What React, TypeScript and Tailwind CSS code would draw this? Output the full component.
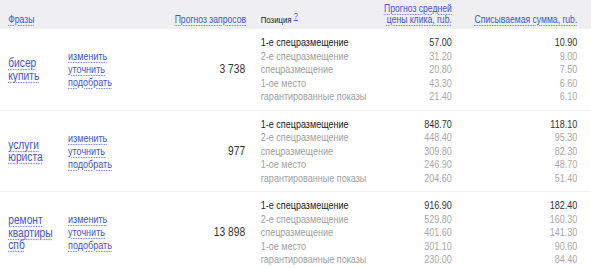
const positions = [
  "1-е спецразмещение",
  "2-е спецразмещение",
  "спецразмещение",
  "1-ое место",
  "гарантированные показы",
];

interface Row {
  phrase: string[];
  forecast: string;
  prices: string[];
  sums: string[];
}

const rows: Row[] = [
  {
    phrase: ["бисер", "купить"],
    forecast: "3 738",
    prices: ["57.00", "31.20", "20.80", "43.30", "21.40"],
    sums: ["10.90", "9.00", "7.50", "6.60", "6.10"],
  },
  {
    phrase: ["услуги", "юриста"],
    forecast: "977",
    prices: ["848.70", "448.40", "309.80", "246.90", "204.60"],
    sums: ["118.10", "95.30", "82.30", "48.70", "51.40"],
  },
  {
    phrase: ["ремонт", "квартиры", "спб"],
    forecast: "13 898",
    prices: ["916.90", "529.80", "401.60", "301.10", "230.00"],
    sums: ["182.40", "160.30", "141.30", "90.60", "84.40"],
  },
];

// the whole table is drawn in a condensed arial look: laid out wider, then squeezed
const grid =
  "grid grid-cols-[83px_130px_86px_158px_94px_153px] pr-[17px]";

function Link({ children }: { children: React.ReactNode }) {
  return (
    <span className="text-[#4455cc] underline decoration-dotted decoration-[#6677dd] underline-offset-2">
      {children}
    </span>
  );
}

export default function App() {
  return (
    <div className="w-[591px] h-[268px] overflow-hidden bg-white">
      <div
        className="w-[721px] origin-top-left scale-x-[0.82] text-[11px]"
        style={{ fontFamily: '"Liberation Sans", Arial, sans-serif' }}
      >
        {/* header */}
        <div className={`${grid} h-[29px] bg-[#efeff2] items-end pb-[4px] leading-[11px] text-[10.5px]`}>
          <div className="pl-[10px]">
            <Link>Фразы</Link>
          </div>
          <div />
          <div className="text-right whitespace-nowrap">
            <Link>Прогноз запросов</Link>
          </div>
          <div className="pl-[19px] text-[#222] text-[9.5px]">
            Позиция <sup className="text-[#4455cc] underline text-[9px]">?</sup>
          </div>
          <div className="text-right whitespace-nowrap">
            <Link>Прогноз средней</Link>
            <br />
            <Link>цены клика, rub.</Link>
          </div>
          <div className="text-right whitespace-nowrap">
            <Link>Списываемая сумма, rub.</Link>
          </div>
        </div>

        {rows.map((row, i) => (
          <div
            key={i}
            className={`${grid} pt-[7px] pb-[6px] border-b border-[#f0f0f3] items-center`}
          >
            <div className="pl-[10px] text-[12.5px] leading-[12.5px] flex flex-col items-start">
              {row.phrase.map((w) => (
                <Link key={w}>{w}</Link>
              ))}
            </div>
            <div className="leading-[13px] flex flex-col items-start">
              <Link>изменить</Link>
              <Link>уточнить</Link>
              <Link>подобрать</Link>
            </div>
            <div className="text-right text-[12.5px] text-[#333]">{row.forecast}</div>
            <div className="pl-[19px] leading-[13.5px] whitespace-nowrap">
              {positions.map((p, j) => (
                <div key={p} className={j === 0 ? "text-[#222]" : "text-[#a0a0a0]"}>
                  {p}
                </div>
              ))}
            </div>
            <div className="text-right leading-[13.5px]">
              {row.prices.map((p, j) => (
                <div key={j} className={j === 0 ? "text-[#333]" : "text-[#a8a8a8]"}>
                  {p}
                </div>
              ))}
            </div>
            <div className="text-right leading-[13.5px]">
              {row.sums.map((p, j) => (
                <div key={j} className={j === 0 ? "text-[#333]" : "text-[#a8a8a8]"}>
                  {p}
                </div>
              ))}
            </div>
          </div>
        ))}
      </div>
    </div>
  );
}
